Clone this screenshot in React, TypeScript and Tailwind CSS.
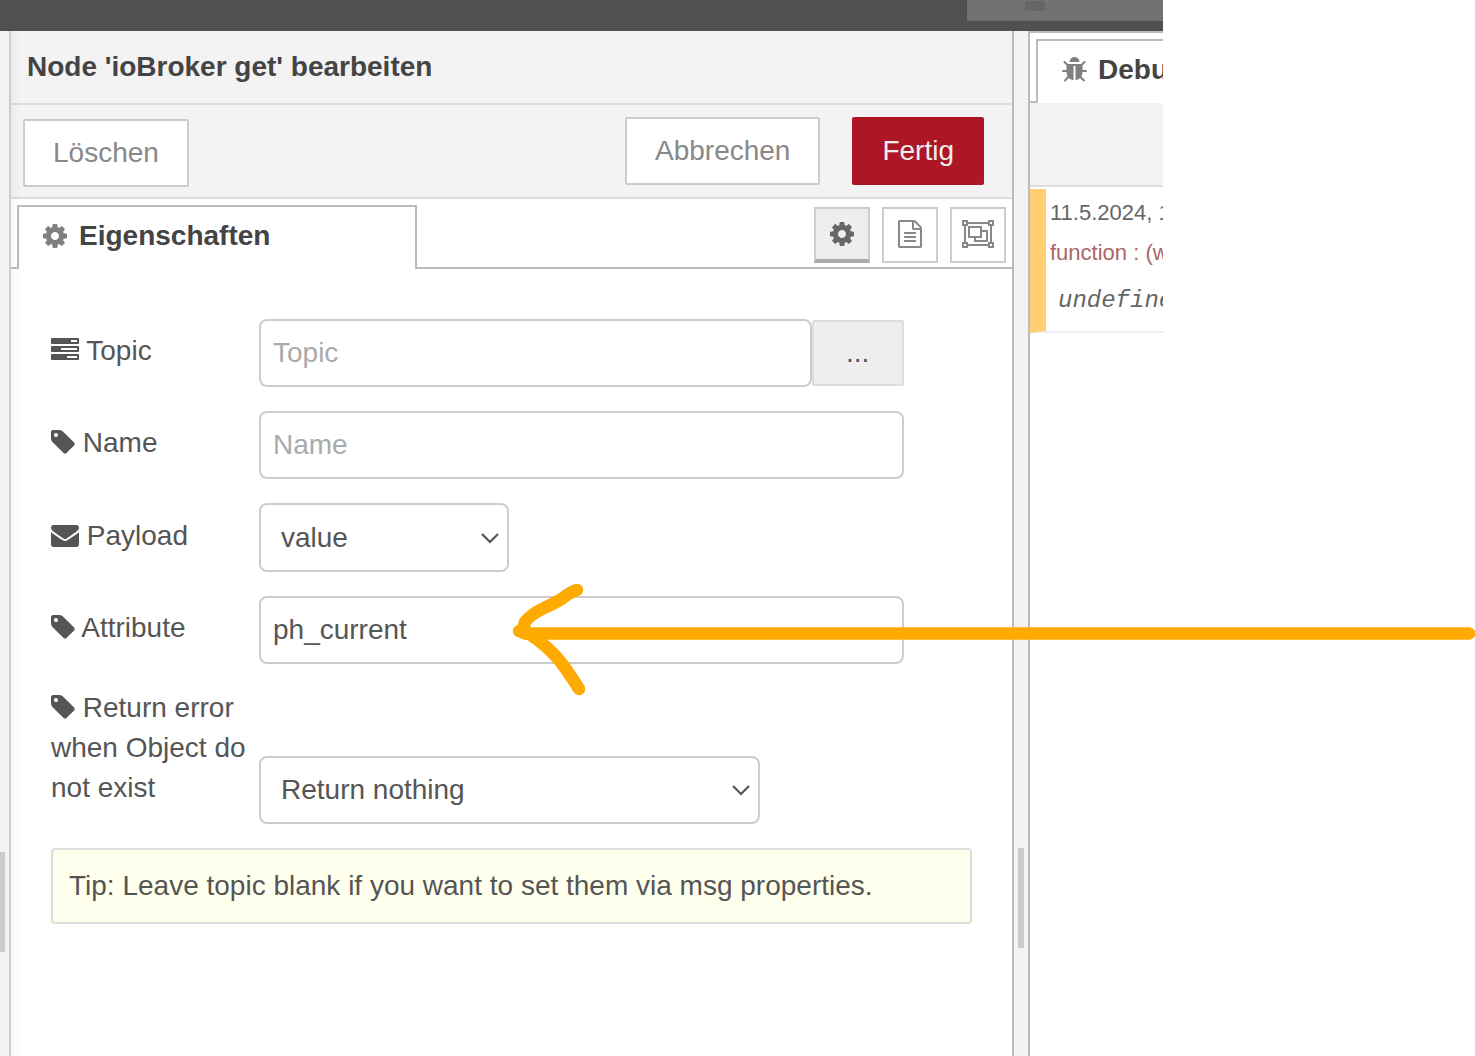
import { useState } from "react";
import type { ReactNode } from "react";

const TAG =
  "M576 448q0-53-37.5-90.5t-90.5-37.5-90.5 37.5-37.5 90.5 37.5 90.5 90.5 37.5 90.5-37.5 37.5-90.5zm1067 576q0 53-37 90l-491 492q-39 37-91 37-53 0-90-37l-715-716q-38-37-64.5-101t-26.5-117v-416q0-52 38-90t90-38h416q53 0 117 26.5t102 64.5l715 714q37 39 37 91z";
const COG =
  "M1152 896q0-106-75-181t-181-75-181 75-75 181 75 181 181 75 181-75 75-181zm512-109v222q0 12-8 23t-20 13l-185 28q-19 54-39 91 35 50 107 138 10 12 10 25t-9 23q-27 37-99 108t-94 71q-12 0-26-9l-138-108q-44 23-91 38-16 136-29 186-7 28-36 28h-222q-14 0-24.5-8.5t-11.5-21.5l-28-184q-49-16-90-37l-141 107q-10 9-25 9-14 0-25-11-126-114-165-168-7-10-7-23 0-12 8-23 15-21 51-66.5t54-70.5q-27-50-41-99l-183-27q-13-2-21-12.5t-8-23.5v-222q0-12 8-23t19-13l186-28q14-46 39-92-40-57-107-138-10-12-10-24 0-10 9-23 26-36 98.5-107.5t94.5-71.5q13 0 26 10l138 107q44-23 91-38 16-136 29-186 7-28 36-28h222q14 0 24.5 8.5t11.5 21.5l28 184q49 16 90 37l142-107q9-9 24-9 13 0 25 10 129 119 165 170 7 8 7 22 0 12-8 23-15 21-51 66.5t-54 70.5q26 50 41 98l183 28q13 2 21 12.5t8 23.5z";
const FILE_TEXT =
  "M1596 380q28 28 48 76t20 88v1152q0 40-28 68t-68 28h-1344q-40 0-68-28t-28-68v-1600q0-40 28-68t68-28h896q40 0 88 20t76 48zm-444-244v376h376q-10-29-22-41l-313-313q-12-12-41-22zm384 1528v-1024h-416q-40 0-68-28t-28-68v-416h-768v1536h1280zm-1024-864q0-14 9-23t23-9h704q14 0 23 9t9 23v64q0 14-9 23t-23 9h-704q-14 0-23-9t-9-23v-64zm736 224q14 0 23 9t9 23v64q0 14-9 23t-23 9h-704q-14 0-23-9t-9-23v-64q0-14 9-23t23-9h704zm0 256q14 0 23 9t9 23v64q0 14-9 23t-23 9h-704q-14 0-23-9t-9-23v-64q0-14 9-23t23-9h704z";
const OBJECT_GROUP =
  "M2048 384h-128v1024h128v384h-384v-128h-1280v128h-384v-384h128v-1024h-128v-384h384v128h1280v-128h384v384zm-256-256v128h128v-128h-128zm-1664 0v128h128v-128h-128zm128 1536v-128h-128v128h128zm1408-128v-128h128v-1024h-128v-128h-1280v128h-128v1024h128v128h1280zm256 128v-128h-128v128h128zm-640-1024h384v768h-896v-256h-384v-768h896v256zm-768 384h640v-512h-640v512zm1024 256v-512h-256v384h-384v128h640z";
const BUG =
  "M1696 960q0 26-19 45t-45 19h-224q0 171-67 290l208 209q19 19 19 45t-19 45q-18 19-45 19t-45-19l-198-197q-5 5-15 13t-42 28.5-65 36.5-82 29-97 13v-896h-128v896q-51 0-101.5-13.5t-87-33-66-39-43.5-32.5l-15-14-183 207q-20 21-48 21-24 0-43-16-19-18-20.5-44.5t15.5-46.5l202-227q-58-114-58-274h-224q-26 0-45-19t-19-45 19-45 45-19h224v-294l-173-173q-19-19-19-45t19-45 45-19 45 19l173 173h844l173-173q19-19 45-19t45 19 19 45-19 45l-173 173v294h224q26 0 45 19t19 45zm-480-576h-640q0-133 93.5-226.5t226.5-93.5 226.5 93.5 93.5 226.5z";
const ENVELOPE =
  "M1792 710v794q0 66-47 113t-113 47h-1472q-66 0-113-47t-47-113v-794q44 49 101 87 362 246 497 345 57 42 92.5 65.5t94.5 48 110 24.5h2q51 0 110-24.5t94.5-48 92.5-65.5q170-123 498-345 57-39 100-87zm0-294q0 79-49 151t-122 123q-376 261-468 325-10 7-42.5 31t-54 38.5-52 32.5-57.5 27-50 9h-2q-23 0-50-9t-57.5-27-52-32.5-54-38.5-42.5-31q-91-64-262-182.5t-205-142.5q-62-42-117-115.5t-55-136.5q0-78 41.5-130t118.5-52h1472q65 0 112.5 47t47.5 113z";
const TASKS =
  "M1024 1408h640v-128h-640v128zm-384-512h1024v-128h-1024v128zm640-512h384v-128h-384v128zm512 832v256q0 26-19 45t-45 19h-1664q-26 0-45-19t-19-45v-256q0-26 19-45t45-19h1664q26 0 45 19t19 45zm0-512v256q0 26-19 45t-45 19h-1664q-26 0-45-19t-19-45v-256q0-26 19-45t45-19h1664q26 0 45 19t19 45zm0-512v256q0 26-19 45t-45 19h-1664q-26 0-45-19t-19-45v-256q0-26 19-45t45-19h1664q26 0 45 19t19 45z";

function Icon({ d, viewBox, className }: { d: string; viewBox: string; className: string }) {
  return (
    <svg viewBox={viewBox} className={className} fill="currentColor" aria-hidden="true">
      <path d={d} />
    </svg>
  );
}

const NARROW = "128 0 1536 1792";
const WIDE = "0 0 1792 1792";

function TagIcon() {
  return <Icon d={TAG} viewBox={NARROW} className="inline h-7 w-6 align-[-4px]" />;
}

function Row({ id, label, icon, tall, children }: { id: string; label: string; icon: ReactNode; tall?: boolean; children: ReactNode }) {
  return (
    <div className={tall ? "flex items-end" : "flex items-center"}>
      <label htmlFor={id} className={tall ? "w-52 shrink-0 pr-3 pb-4 leading-10" : "w-52 shrink-0 pb-1 leading-10"}>
        {icon} {label}
      </label>
      {children}
    </div>
  );
}

function Select({ id, options, className }: { id: string; options: string[]; className: string }) {
  return (
    <div className={className}>
      <select id={id} className="size-full appearance-none rounded-lg border-2 border-[#ccc] bg-white pr-10 pl-5 outline-none">
        {options.map((o) => (
          <option key={o}>{o}</option>
        ))}
      </select>
      <svg viewBox="0 0 18 12" className="pointer-events-none absolute top-1/2 right-2.5 h-3 w-[18px] -translate-y-1/2" fill="none" stroke="#555" strokeWidth="2.2" aria-hidden="true">
        <path d="M1 2l8 8 8-8" />
      </svg>
    </div>
  );
}

export default function App() {
  const [topic, setTopic] = useState("");
  const [name, setName] = useState("");
  const [attribute, setAttribute] = useState("ph_current");
  const input = "h-[68px] min-w-0 rounded-lg border-2 border-[#ccc] bg-white px-3 outline-none placeholder:text-[#aaa]";

  return (
    <div className="relative flex min-h-screen overflow-hidden bg-white font-['Liberation_Sans',Arial,sans-serif] text-[28px] text-[#555]">
      <div className="flex min-w-0 flex-1 flex-col">
        <div className="flex h-[31px] shrink-0 items-start justify-end bg-[#505050]">
          <div className="flex h-[21px] w-[196px] bg-[#727272] pl-[58px]">
            <div className="mt-px h-2.5 w-5 bg-[#666]" />
          </div>
        </div>

        <div className="flex flex-1">
          <div className="w-[11px] shrink-0 border-r-2 border-[#ccc] bg-[#f3f3f3]">
            <div className="mt-[821px] h-[100px] w-[5px] bg-[#ccc]" />
          </div>

          <main className="relative flex min-w-0 flex-1 flex-col">
            <div className="pointer-events-none absolute inset-y-0 left-0 w-2.5 bg-linear-to-r from-black/3 to-transparent" />
            <header className="flex h-[74px] items-center border-b-2 border-[#ddd] bg-[#f3f3f3] px-4">
              <h1 className="font-bold text-[#444]">Node 'ioBroker get' bearbeiten</h1>
            </header>

            <div className="flex h-[94px] items-start border-b-2 border-[#ddd] bg-[#f3f3f3] pt-3 pr-7 pl-3 text-[#888]">
              <button type="button" className="mt-0.5 h-[68px] rounded-xs border-2 border-[#ccc] bg-white px-7">Löschen</button>
              <div className="ml-auto flex gap-8">
                <button type="button" className="h-[68px] rounded-xs border-2 border-[#ccc] bg-white px-7">Abbrechen</button>
                <button type="button" className="h-[68px] rounded-xs border-2 border-[#ad1625] bg-[#ad1625] px-7 text-[#eee]">Fertig</button>
              </div>
            </div>

            <div className="flex h-[70px]">
              <div className="w-1.5 border-b-2 border-[#bbb]" />
              <div className="mt-1.5 flex w-[400px] items-center gap-3 border-x-2 border-t-2 border-[#bbb] pb-1 pl-6">
                <Icon d={COG} viewBox="128 128 1536 1536" className="size-6 text-[#808080]" />
                <h2 className="font-bold text-[#444]">Eigenschaften</h2>
              </div>
              <div className="flex flex-1 items-start justify-end gap-3 border-b-2 border-[#bbb] pt-2 pr-1.5 text-[#888]">
                <button type="button" aria-label="Eigenschaften" className="flex size-14 items-center justify-center border-2 border-b-4 border-[#ccc] border-b-[#aaa] bg-[#eee] text-[#666]">
                  <Icon d={COG} viewBox="128 128 1536 1536" className="size-6" />
                </button>
                <button type="button" aria-label="Beschreibung" className="flex size-14 items-center justify-center border-2 border-[#ccc] bg-white pb-0.5">
                  <Icon d={FILE_TEXT} viewBox="128 0 1536 1792" className="h-7 w-6" />
                </button>
                <button type="button" aria-label="Erscheinungsbild" className="flex size-14 items-center justify-center border-2 border-[#ccc] bg-white pb-0.5">
                  <Icon d={OBJECT_GROUP} viewBox="0 0 2048 1792" className="h-7 w-8" />
                </button>
              </div>
            </div>

            <form className="flex flex-col gap-6 pt-[50px] pr-10 pl-10" onSubmit={(e) => e.preventDefault()}>
              <Row id="topic" label="Topic" icon={<Icon d={TASKS} viewBox={WIDE} className="inline size-7 align-[-4px]" />}>
                <div className="flex w-[70%] items-center">
                  <input id="topic" placeholder="Topic" value={topic} onChange={(e) => setTopic(e.target.value)} className={`${input} flex-1`} />
                  <button type="button" aria-label="Topic auswählen" className="h-[66px] w-[92px] rounded-xs border-2 border-[#ddd] bg-[#eee]">...</button>
                </div>
              </Row>
              <Row id="name" label="Name" icon={<TagIcon />}>
                <input id="name" placeholder="Name" value={name} onChange={(e) => setName(e.target.value)} className={`${input} w-[70%]`} />
              </Row>
              <Row id="payload" label="Payload" icon={<Icon d={ENVELOPE} viewBox={WIDE} className="inline size-7 align-[-4px]" />}>
                <Select id="payload" options={["value", "object"]} className="relative h-[69px] w-[250px]" />
              </Row>
              <Row id="attribute" label="Attribute" icon={<TagIcon />}>
                <input id="attribute" value={attribute} onChange={(e) => setAttribute(e.target.value)} className={`${input} w-[70%]`} />
              </Row>
              <Row id="error" label="Return error when Object do not exist" icon={<TagIcon />} tall>
                <Select id="error" options={["Return nothing", "Return error"]} className="relative h-[68px] w-[501px]" />
              </Row>
              <p className="rounded-sm border-2 border-[#ddd] bg-[#ffffee] px-4 py-4 leading-10">
                Tip: Leave topic blank if you want to set them via msg properties.
              </p>
            </form>
          </main>

          <div className="w-[18px] shrink-0 border-x-2 border-[#bbb] bg-[#f3f3f3] px-1">
            <div className="mt-[817px] h-[100px] w-1.5 bg-[#ccc]" />
          </div>

          <aside className="w-[133px] shrink-0 overflow-hidden border-t-2 border-[#bbb]">
            <div className="flex h-[70px]">
              <div className="w-1.5 shrink-0 border-b-2 border-[#bbb]" />
              <div className="mt-1.5 flex shrink-0 items-center gap-[11px] border-t-2 border-l-2 border-[#bbb] pb-1 pl-6">
                <Icon d={BUG} viewBox="96 0 1600 1792" className="h-7 w-[25px] text-[#808080]" />
                <h2 className="font-bold text-[#444]">Debug</h2>
              </div>
            </div>
            <div className="h-[84px] border-b-2 border-[#ddd] bg-[#f3f3f3]" />
            <div className="mt-0.5 h-36 border-b-2 border-l-16 border-[#eee] border-l-[#ffcf70] pl-1 text-[22px] whitespace-nowrap">
              <p className="pt-1 leading-10 text-[#666]">11.5.2024, 11:28:15</p>
              <p className="leading-10 text-[#a66]">function : (warn)</p>
              <p className="pt-2 pl-2 font-['Liberation_Mono',monospace] text-2xl leading-10 text-[#666] italic">undefined</p>
            </div>
          </aside>
        </div>
      </div>

      <div className="w-[312px] shrink-0" />

      <div className="pointer-events-none absolute top-[580px] right-1.5 left-[513px] h-[120px]">
        <svg className="size-full overflow-visible" fill="none" stroke="#ffaa00" strokeWidth="12.5" strokeLinecap="round" strokeLinejoin="round" aria-hidden="true">
          <line x1="12" y1="53.5" x2="100%" y2="53.5" />
          <path d="M6 51L12 53" />
          <path d="M64 10C56 12 51 18 45 21C38 25 33 27 29 29C23 32 15 38 12 42C11 45 11 48 10 52" />
          <path d="M12 51C23 58 39 70 50 85C56 94 61 100 66 109" />
        </svg>
      </div>
    </div>
  );
}
